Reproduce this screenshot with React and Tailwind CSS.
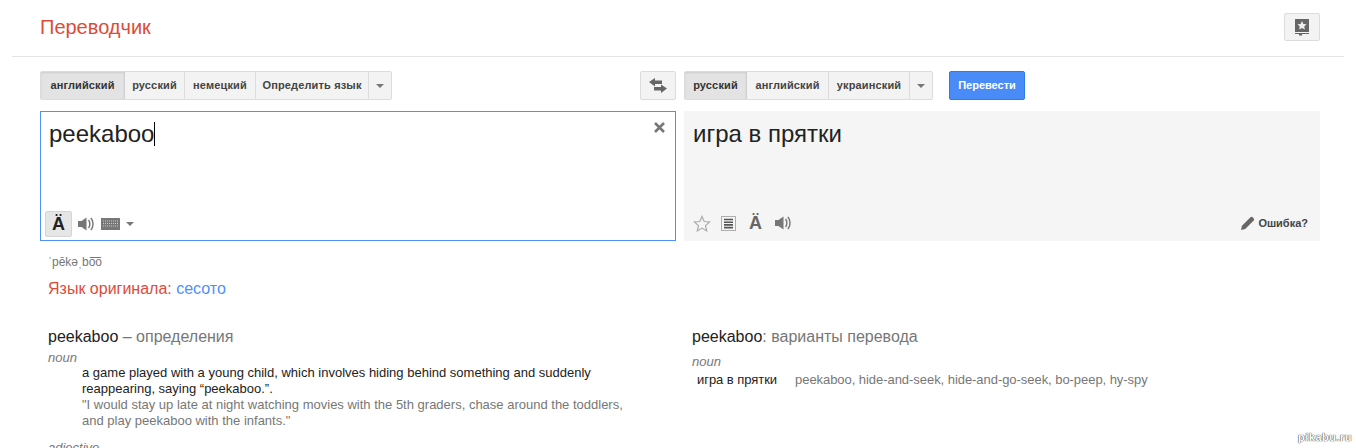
const Caret = () => <span className="block w-0 h-0 border-x-[4px] border-x-transparent border-t-[4px] border-t-[#777]" />;

const Speaker = ({ color = '#777' }) => (
  <svg width="16" height="16" viewBox="0 0 16 16" fill={color}>
    <path d="M0 5h3.500L8.500 1.500v13L3.500 11H0z" />
    <path d="M10 4.500c1.500 1.900 1.500 5.100 0 7l1.100.9c2-2.300 2-6.500 0-8.800z" />
    <path d="M12.300 2.500c2.600 3.100 2.600 7.900 0 11l1.100.9c3-3.500 3-9.300 0-12.800z" />
  </svg>
);

const LangTabs = ({ langs }) => (
  <div className="flex h-[29px] rounded-[2px] border border-[#dcdcdc] bg-[#f3f3f3] text-[11px] font-bold text-[#444] tracking-[0.15px]">
    {langs.map(({ name, width }, i) => (
      <div
        key={name}
        className={
          i === 0
            ? `flex items-center justify-center border-r border-[#cfcfcf] bg-[#e3e3e3] shadow-[inset_0_1px_2px_rgba(0,0,0,0.1)] text-[#333] ${width}`
            : `flex items-center justify-center border-r border-[#dcdcdc] ${width}`
        }>
        {name}
      </div>
    ))}
    <div className="flex items-center justify-center w-[22px]">
      <Caret />
    </div>
  </div>
);

const sourceLangs = [
  { name: 'английский', width: 'w-[84px]' },
  { name: 'русский', width: 'w-[60px]' },
  { name: 'немецкий', width: 'w-[71px]' },
  { name: 'Определить язык', width: 'w-[113px]' },
];

const targetLangs = [
  { name: 'русский', width: 'w-[62px]' },
  { name: 'английский', width: 'w-[82px]' },
  { name: 'украинский', width: 'w-[81px]' },
];

const App = () => {
  return (
    <div className="relative h-[448px] w-full overflow-hidden bg-white font-['Liberation_Sans',Arial,sans-serif]">
      <div className="mx-3 flex h-[57px] items-center justify-between border-b border-[#e5e5e5] pl-7 pr-6 pb-[2px]">
        <span className="text-xl text-[#dd4b39]">Переводчик</span>
        <div className="flex h-[28px] w-[36px] items-center justify-center rounded-[2px] border border-[#dcdcdc] bg-[#f3f3f3]">
          <svg width="14" height="17" viewBox="0 0 14 17">
            <path d="M0 0h14v13H0z" fill="#666" />
            <path d="M0 14h14v1H7v1.500H4V15H0z" fill="#666" />
            <path d="M7 2l1.400 3 3.200.3-2.400 2.100.7 3.100L7 8.900l-2.900 1.600.7-3.100-2.400-2.100 3.200-.3z" fill="#eee" />
          </svg>
        </div>
      </div>

      <div className="mt-[14px] grid grid-cols-[636px_636px] gap-x-2 px-10">
        <div className="flex justify-between">
          <LangTabs langs={sourceLangs} />
          <div className="flex h-[29px] w-[36px] items-center justify-center rounded-[2px] border border-[#dcdcdc] bg-[#f3f3f3]">
            <svg width="18" height="15" viewBox="0 0 18 15" fill="#666">
              <path d="M0 4l6-4v2.500h7v3.500H6v2.500z" />
              <path d="M18 10.500l-6-4V9H5v3.500h7V15z" />
            </svg>
          </div>
        </div>
        <div className="flex gap-4">
          <LangTabs langs={targetLangs} />
          <div className="flex h-[29px] w-[76px] items-center justify-center rounded-[2px] border border-[#3079ed] bg-[#4a8cf7] text-[11px] font-bold text-white">
            Перевести
          </div>
        </div>

        <div className="relative mt-[11px] flex h-[130px] flex-col justify-between border border-[#4d90fe] pb-[3px] pl-[4px] pt-[4px]">
          <div className="flex items-center pl-1 text-2xl leading-[36px] text-[#222]">
            peekaboo
            <span className="h-[24px] w-px bg-black" />
          </div>
          <svg className="absolute right-[10px] top-[10px]" width="11" height="11" viewBox="0 0 11 11" stroke="#777" strokeWidth="2.600">
            <path d="M1 1l9 9M10 1l-9 9" />
          </svg>
          <div className="flex items-center">
            <div className="flex h-[26px] w-[27px] items-center justify-center rounded-[2px] border border-[#d5d5d5] bg-[#e6e6e6] text-lg font-bold leading-none text-[#222]">
              Ä
            </div>
            <div className="ml-[6px]">
              <Speaker />
            </div>
            <svg className="ml-[7px]" width="19" height="12" viewBox="0 0 19 12">
              <rect width="19" height="12" fill="#777" />
              <path d="M2 3h15M2 5.500h15M2 8h15" stroke="#ccc" strokeWidth="1" strokeDasharray="1 1" />
            </svg>
            <span className="ml-[6px]">
              <Caret />
            </span>
          </div>
        </div>

        <div className="mt-[11px] flex h-[130px] flex-col justify-between bg-[#f5f5f5] pb-[9px] pl-[9px] pr-3 pt-[5px]">
          <div className="text-2xl leading-[36px] text-[#222]">игра в прятки</div>
          <div className="flex items-center justify-between">
            <div className="flex items-center">
              <svg width="18" height="17" viewBox="0 0 18 17" fill="none" stroke="#aaa" strokeWidth="1.200">
                <path d="M9 1.500l2.200 5 5.400.5-4.100 3.600 1.200 5.300L9 13.100l-4.700 2.800 1.200-5.300L1.400 7l5.400-.5z" />
              </svg>
              <svg className="ml-[10px]" width="15" height="15" viewBox="0 0 15 15">
                <rect x=".5" y=".5" width="14" height="14" fill="none" stroke="#666" strokeDasharray="1 1" />
                <path d="M3 3.500h9M3 6.200h9M3 8.900h9M3 11.600h9" stroke="#555" strokeWidth="1.600" />
              </svg>
              <span className="ml-[13px] text-lg font-bold leading-none text-[#666]">Ä</span>
              <span className="ml-[13px]">
                <Speaker />
              </span>
            </div>
            <div className="flex items-center gap-[3px] text-[11px] font-bold text-[#444]">
              <svg width="14" height="14" viewBox="0 0 14 14" fill="#666">
                <path d="M0 14l1-4.200L9.500 1.300a1.500 1.500 0 0 1 2.100 0l1.100 1.100a1.500 1.500 0 0 1 0 2.100L4.200 13z" />
              </svg>
              Ошибка?
            </div>
          </div>
        </div>

        <div className="mt-[13px] pl-2">
          <div className="text-xs leading-[16px] text-[#777]">ˈpēkəˌbo͞o</div>
          <div className="mt-[9px] text-base leading-[20px] text-[#dd4b39]">
            Язык оригинала: <span className="text-[#4d90fe]">сесото</span>
          </div>
        </div>
        <div />

        <div className="mt-[28px] pl-2">
          <div className="text-base leading-[20px] text-[#222]">
            peekaboo <span className="text-[#777]">– определения</span>
          </div>
          <div className="mt-[3px] text-[13px] italic leading-[15px] text-[#777]">noun</div>
          <div className="w-[590px] pl-[34px] text-[13px] leading-[16px]">
            <div className="text-[#222]">
              a game played with a young child, which involves hiding behind something and suddenly reappearing, saying “peekaboo.”.
            </div>
            <div className="text-[#777]">
              "I would stay up late at night watching movies with the 5th graders, chase around the toddlers, and play peekaboo with the infants."
            </div>
          </div>
          <div className="mt-[11px] text-[13px] italic leading-[16px] text-[#777]">adjective</div>
        </div>

        <div className="mt-[28px] pl-2">
          <div className="text-base leading-[20px] text-[#222]">
            peekaboo<span className="text-[#777]">: варианты перевода</span>
          </div>
          <div className="mt-[7px] text-[13px] italic leading-[16px] text-[#777]">noun</div>
          <div className="mt-[2px] flex text-[13px] leading-[16px] tracking-[-0.05px]">
            <span className="pl-[5px] text-[#222]">игра в прятки</span>
            <span className="ml-[18px] text-[#777]">peekaboo, hide-and-seek, hide-and-go-seek, bo-peep, hy-spy</span>
          </div>
        </div>
      </div>

      <div className="absolute bottom-[4px] right-[4px] text-[11px] font-bold leading-[14px] tracking-[0.5px] text-white [text-shadow:0_0_1px_#333,0_0_1px_#333]">
        pikabu.ru
      </div>
    </div>
  );
};

export default App;
